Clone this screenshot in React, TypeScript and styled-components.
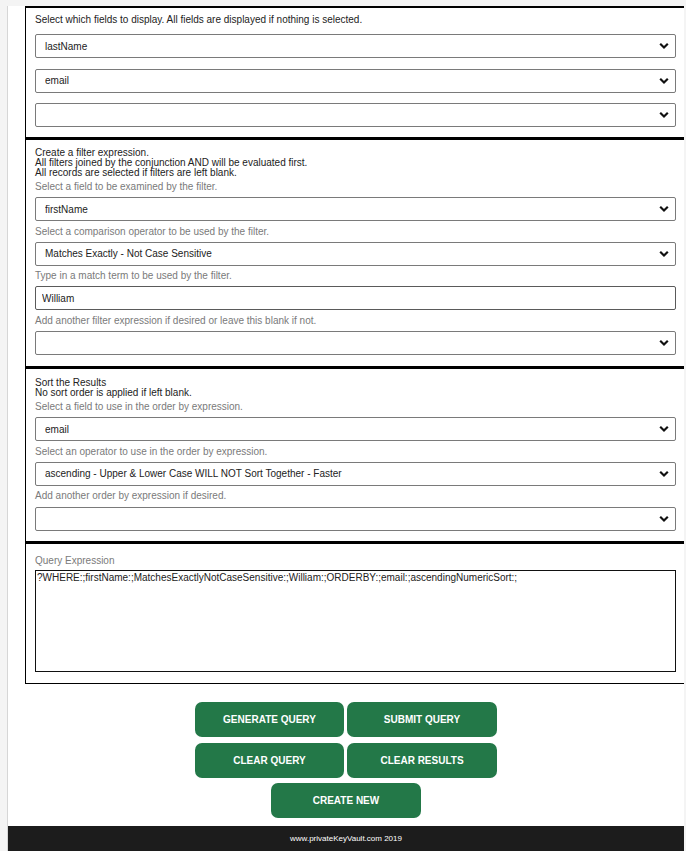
import React from 'react';
import styled, { createGlobalStyle } from 'styled-components';

const GlobalStyle = createGlobalStyle`
  html, body { margin: 0; padding: 0; background: #f4f4f4; }
  body { font-family: "Liberation Sans", Arial, sans-serif; }
  * { box-sizing: border-box; }
`;

const Page = styled.div`
  width: 677px;
  margin: 6px 0 0 7px;
  border-left: 1px solid #d6d6d6;
  background: #fff;
  overflow: hidden;
`;

const Card = styled.div`
  margin-left: 17px;
  width: 662px;
`;

const Section = styled.section<{ $pt: number; $pb: number }>`
  display: flex;
  flex-direction: column;
  border: 1px solid #000;
  border-top-width: 2px;
  padding: ${(p) => p.$pt}px 10px ${(p) => p.$pb}px 9px;
  & + & {
    border-top-width: 2px;
  }
`;

const Intro = styled.div`
  font-size: 10px;
  line-height: 12px;
  color: #222;
  margin-bottom: 8px;
`;

const Header = styled.div`
  font-size: 10px;
  line-height: 10px;
  color: #222;
`;

const Label = styled.div<{ $first?: boolean }>`
  font-size: 10px;
  line-height: 12px;
  color: #7a7a7a;
  margin: ${(p) => (p.$first ? '3px' : '4.3px')} 0 4.3px;
`;

const SelectStack = styled.div`
  display: flex;
  flex-direction: column;
  gap: 10.5px;
`;

const SelectWrap = styled.div`
  position: relative;
  height: 24px;
`;

const Select = styled.select`
  appearance: none;
  -webkit-appearance: none;
  width: 100%;
  height: 24px;
  border: 1px solid #7a7a7a;
  border-radius: 2px;
  background: #fff;
  padding: 0 24px 0 9px;
  font-family: "Liberation Sans", Arial, sans-serif;
  font-size: 10px;
  color: #222;
  outline: none;
`;

const Chevron = styled.svg`
  position: absolute;
  right: 7px;
  top: 50%;
  transform: translateY(-50%);
  pointer-events: none;
`;

const Input = styled.input`
  width: 100%;
  height: 24px;
  border: 1px solid #5a5a5a;
  border-radius: 2px;
  padding: 0 6px;
  font-family: "Liberation Sans", Arial, sans-serif;
  font-size: 10px;
  color: #222;
  outline: none;
`;

const QueryLabel = styled.div`
  font-size: 10px;
  line-height: 12px;
  color: #7a7a7a;
  margin-bottom: 3px;
`;

const TextArea = styled.textarea`
  width: 100%;
  height: 102px;
  border: 1px solid #111;
  padding: 1px 1px;
  resize: none;
  font-family: "Liberation Sans", Arial, sans-serif;
  font-size: 10px;
  line-height: 12px;
  color: #222;
  outline: none;
`;

const Buttons = styled.div`
  margin-top: 18px;
  display: flex;
  flex-direction: column;
  align-items: center;
  gap: 5px;
`;

const ButtonGrid = styled.div`
  display: grid;
  grid-template-columns: 149px 150px;
  column-gap: 3px;
  row-gap: 6px;
`;

const Button = styled.button`
  height: 35px;
  width: 100%;
  border: none;
  border-radius: 7px;
  background: #237848;
  color: #fff;
  font-family: "Liberation Sans", Arial, sans-serif;
  font-size: 10px;
  font-weight: bold;
  cursor: pointer;
`;

const SingleButton = styled(Button)`
  width: 150px;
`;

const Footer = styled.footer`
  margin-top: 8px;
  height: 25px;
  background: #1c1c1c;
  color: #fff;
  font-size: 8px;
  display: flex;
  align-items: center;
  justify-content: center;
`;

const ChevronIcon = () => (
  <Chevron width="10" height="7" viewBox="0 0 10 7">
    <polyline points="1.2,1.3 5,5 8.8,1.3" fill="none" stroke="#111" strokeWidth="2.2" />
  </Chevron>
);

const Dropdown = ({ value }: { value: string }) => (
  <SelectWrap>
    <Select defaultValue={value}>
      <option value={value}>{value}</option>
    </Select>
    <ChevronIcon />
  </SelectWrap>
);

export default function App() {
  return (
    <>
      <GlobalStyle />
      <Page>
        <Card>
          <Section $pt={6} $pb={10}>
            <Intro>Select which fields to display. All fields are displayed if nothing is selected.</Intro>
            <SelectStack>
              <Dropdown value="lastName" />
              <Dropdown value="email" />
              <Dropdown value="" />
            </SelectStack>
          </Section>

          <Section $pt={8} $pb={11}>
            <Header>
              Create a filter expression.
              <br />
              All filters joined by the conjunction AND will be evaluated first.
              <br />
              All records are selected if filters are left blank.
            </Header>
            <Label $first>Select a field to be examined by the filter.</Label>
            <Dropdown value="firstName" />
            <Label>Select a comparison operator to be used by the filter.</Label>
            <Dropdown value="Matches Exactly - Not Case Sensitive" />
            <Label>Type in a match term to be used by the filter.</Label>
            <Input defaultValue="William" />
            <Label>Add another filter expression if desired or leave this blank if not.</Label>
            <Dropdown value="" />
          </Section>

          <Section $pt={9} $pb={10}>
            <Header>
              Sort the Results
              <br />
              No sort order is applied if left blank.
            </Header>
            <Label $first>Select a field to use in the order by expression.</Label>
            <Dropdown value="email" />
            <Label>Select an operator to use in the order by expression.</Label>
            <Dropdown value="ascending - Upper & Lower Case WILL NOT Sort Together - Faster" />
            <Label>Add another order by expression if desired.</Label>
            <Dropdown value="" />
          </Section>

          <Section $pt={11.5} $pb={11}>
            <QueryLabel>Query Expression</QueryLabel>
            <TextArea
              readOnly
              value="?WHERE:;firstName:;MatchesExactlyNotCaseSensitive:;William:;ORDERBY:;email:;ascendingNumericSort:;"
            />
          </Section>
        </Card>

        <Buttons>
          <ButtonGrid>
            <Button>GENERATE QUERY</Button>
            <Button>SUBMIT QUERY</Button>
            <Button>CLEAR QUERY</Button>
            <Button>CLEAR RESULTS</Button>
          </ButtonGrid>
          <SingleButton>CREATE NEW</SingleButton>
        </Buttons>

        <Footer>www.privateKeyVault.com 2019</Footer>
      </Page>
    </>
  );
}
